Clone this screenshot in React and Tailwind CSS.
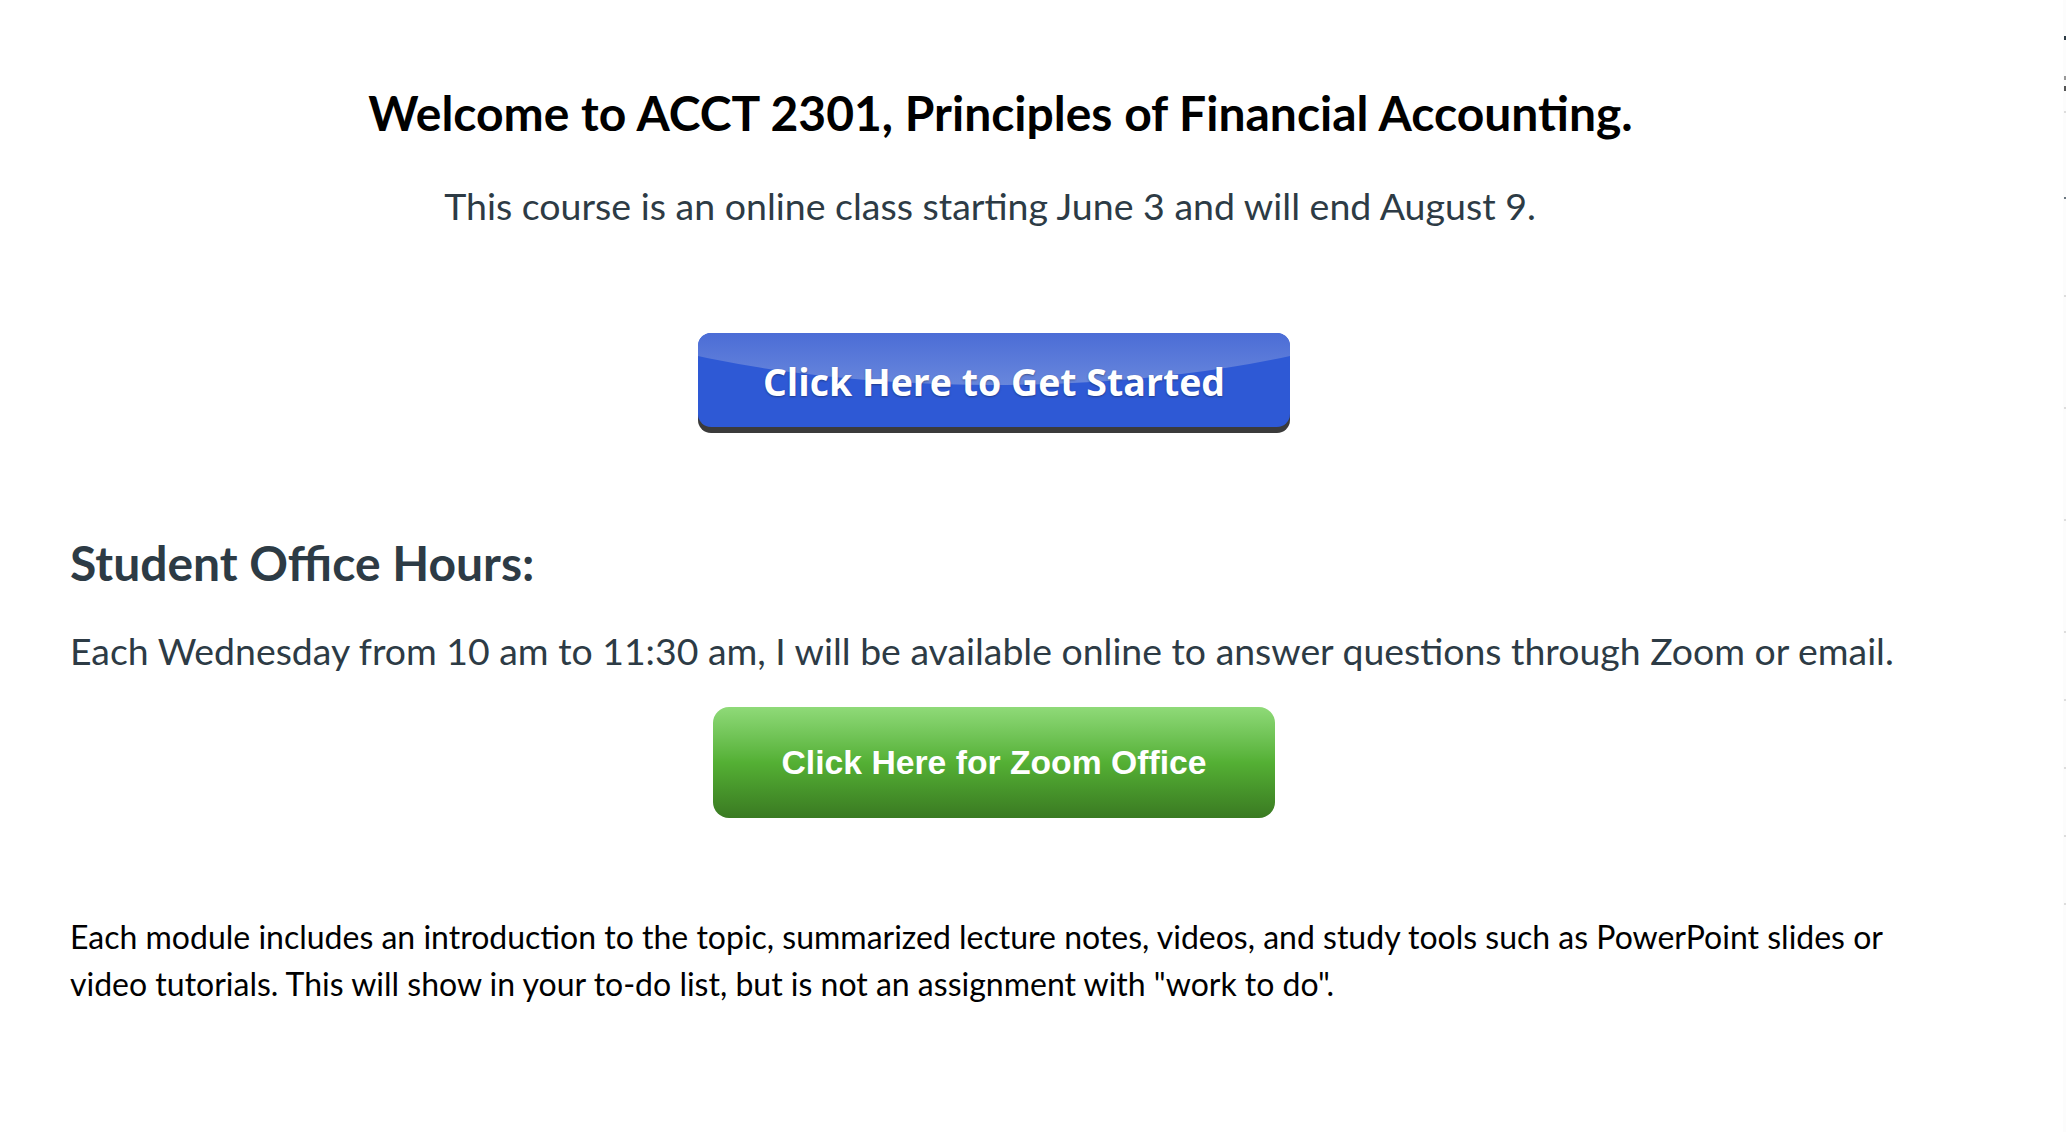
import React from 'react';

// Course home page: welcome banner, two call-to-action buttons, office hours
const App = () => {
  return (
    <div className="flex min-h-[1132px] w-full bg-white">
      <div
        className="w-[1848px] shrink-0 pl-[70px] pt-[86px] box-content"
        style={{ fontFamily: 'Lato, "Noto Sans", sans-serif' }}
      >
        <h1 className="pl-[13px] text-center text-[48px] font-bold leading-[54px] text-black">
          Welcome to ACCT 2301, Principles of Financial Accounting.
        </h1>
        <p className="mt-[40px] pr-[8px] text-center text-[37.5px] leading-[52px] text-[#2d3b45]">
          This course is an online class starting June 3 and will end August 9.
        </p>

        <div className="mt-[101px] flex justify-center">
          <a
            href="#"
            className="relative block h-[94px] w-[592px] overflow-hidden rounded-[13px] bg-[#2e59d5] shadow-[0_6px_0_#3b3b3b]"
          >
            <span className="absolute left-[-204px] top-[-248px] h-[300px] w-[1000px] rounded-[50%] bg-[linear-gradient(to_bottom,#4769d5_80%,#6887dc_100%)]" />
            <span
              className="relative flex h-[94px] items-center justify-center pt-[5px] text-[37.5px] font-bold text-white [text-shadow:0_1px_2px_rgba(0,0,0,0.35)]"
              style={{ fontFamily: '"Open Sans", "Noto Sans", sans-serif' }}
            >
              Click Here to Get Started
            </span>
          </a>
        </div>

        <h2 className="mt-[111px] text-[48px] font-bold leading-[50px] text-[#2d3b45]">
          Student Office Hours:
        </h2>
        <p className="mt-[37px] text-[37.4px] leading-[51px] text-[#2d3b45]">
          Each Wednesday from 10 am to 11:30 am, I will be available online to answer questions through Zoom or email.
        </p>

        <div className="mt-[31px] flex justify-center">
          <a
            href="#"
            className="flex h-[111px] w-[562px] items-center justify-center rounded-[16px] bg-gradient-to-b from-[#8fda78] via-[#54b034] to-[#3a7a22] text-[33.7px] font-bold text-white"
            style={{ fontFamily: '"Liberation Sans", Arial, sans-serif' }}
          >
            Click Here for Zoom Office
          </a>
        </div>

        <p className="mt-[95px] text-[32px] leading-[47px] text-black">
          Each module includes an introduction to the topic, summarized lecture notes, videos, and study tools such as PowerPoint slides or video tutorials. This will show in your to-do list, but is not an assignment with "work to do".
        </p>
      </div>

      {/* clipped edge of the next column */}
      <div className="ml-auto flex w-[3px] flex-col items-end bg-[#fcfcfc] pt-[36px]">
        <span className="h-[4px] w-[2px] bg-[#2d3b45]" />
        <span className="mt-[36px] h-[4px] w-[2px] bg-[#999]" />
        <span className="mt-[6px] h-[5px] w-[2px] bg-[#555]" />
        <span className="mt-[20px] h-[2px] w-[2px] bg-[#ddd]" />
        <span className="mt-[84px] h-[2px] w-[2px] bg-[#6b7780]" />
        <span className="mt-[96px] h-[2px] w-[2px] bg-[#ddd]" />
        <span className="mt-[110px] h-[2px] w-[2px] bg-[#ddd]" />
        <span className="mt-[110px] h-[2px] w-[2px] bg-[#ddd]" />
        <span className="mt-[110px] h-[2px] w-[2px] bg-[#ddd]" />
        <span className="mt-[66px] h-[2px] w-[2px] bg-[#ddd]" />
        <span className="mt-[66px] h-[2px] w-[2px] bg-[#ddd]" />
        <span className="mt-[66px] h-[2px] w-[2px] bg-[#ddd]" />
        <span className="mt-[66px] h-[2px] w-[2px] bg-[#ddd]" />
      </div>
    </div>
  );
};

export default App;
